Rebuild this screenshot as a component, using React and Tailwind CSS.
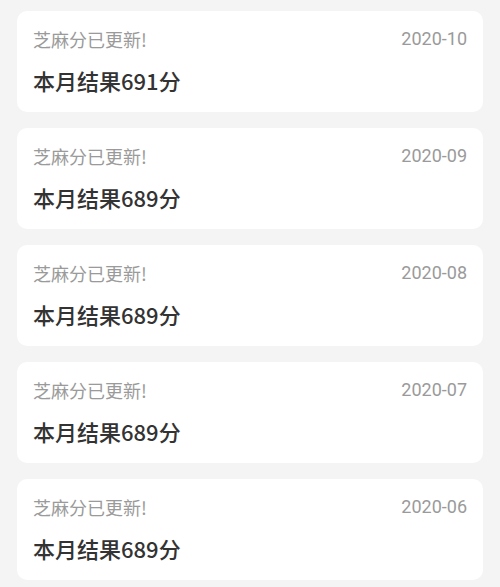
const records = [
  { month: '2020-10', score: 691 },
  { month: '2020-09', score: 689 },
  { month: '2020-08', score: 689 },
  { month: '2020-07', score: 689 },
  { month: '2020-06', score: 689 },
]

const cjk = { fontFamily: '"Noto Sans CJK SC", "Noto Sans", sans-serif' }

export default function App() {
  return (
    <div className="min-h-[587px] bg-[#f4f4f4] px-[17px] pt-[11px] pb-[7px]" style={cjk}>
      <div className="flex flex-col gap-[16px]">
        {records.map((r) => (
          <div key={r.month} className="h-[101px] rounded-[10px] bg-white px-[16px] pt-[16px]">
            <div className="flex items-center justify-between">
              <p className="text-[18px] leading-[24px] text-[#9a9a9a]">芝麻分已更新!</p>
              <p className="text-[18px] leading-[24px] text-[#9a9a9a] font-['Roboto',sans-serif]">
                {r.month}
              </p>
            </div>
            <p className="mt-[14px] text-[22px] leading-[30px] font-medium text-[#333333]">
              本月结果{r.score}分
            </p>
          </div>
        ))}
      </div>
    </div>
  )
}
